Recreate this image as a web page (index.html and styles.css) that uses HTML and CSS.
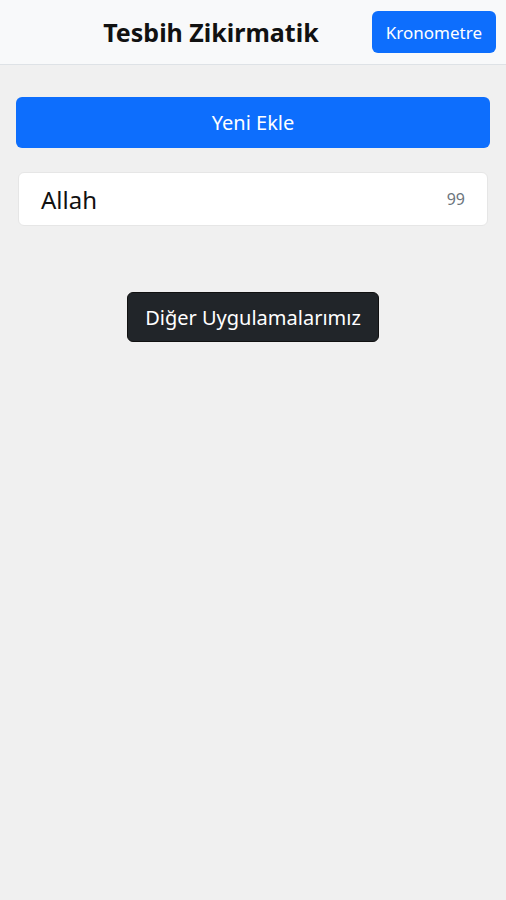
FILE: index.html
```html
<!DOCTYPE html>
<html lang="tr">
<head>
    <meta charset="UTF-8">
    <meta name="viewport" content="width=device-width, initial-scale=1.0">
    <title>Tesbih Zikirmatik</title>
    <link rel="stylesheet" href="styles.css">
</head>
<body>
    <header class="topbar">
        <h1 class="title">Tesbih Zikirmatik</h1>
        <button class="btn btn-primary btn-small">Kronometre</button>
    </header>
    <main class="content">
        <button class="btn btn-primary btn-block">Yeni Ekle</button>
        <div class="zikir-list">
            <div class="zikir-item">
                <span class="zikir-name">Allah</span>
                <span class="zikir-count">99</span>
            </div>
        </div>
        <div class="more-apps">
            <button class="btn btn-dark">Diğer Uygulamalarımız</button>
        </div>
    </main>
</body>
</html>
```

FILE: styles.css
```css
body {
    font-family: "Noto Sans", "Open Sans", sans-serif;
    background-color: #f0f0f0;
    margin: 0;
    padding: 0;
    color: #212529;
}
.topbar {
    display: flex;
    align-items: center;
    height: 64px;
    padding: 0 10px 0 0;
    background-color: #f8f9fa;
    border-bottom: 1px solid #dee2e6;
}
.title {
    flex: 1;
    margin: 0;
    padding-left: 50px;
    text-align: center;
    font-size: 25px;
    font-weight: 700;
    color: #111;
}
.btn {
    font-family: inherit;
    border: none;
    border-radius: 6px;
    color: #fff;
    cursor: pointer;
}
.btn-primary {
    background-color: #0d6efd;
}
.btn-dark {
    background-color: #212529;
    border: 1px solid #111;
}
.btn-small {
    height: 42px;
    padding: 0 14px;
    font-size: 17px;
}
.content {
    padding: 32px 16px;
}
.btn-block {
    display: block;
    width: 100%;
    height: 51px;
    font-size: 20px;
}
.zikir-list {
    margin: 24px 2px 0;
}
.zikir-item {
    display: flex;
    align-items: center;
    justify-content: space-between;
    height: 52px;
    padding: 0 22px;
    background-color: #fff;
    border: 1px solid #e6e6e6;
    border-radius: 6px;
}
.zikir-name {
    font-size: 24px;
    color: #111;
}
.zikir-count {
    font-size: 16px;
    color: #6c757d;
}
.more-apps {
    display: flex;
    justify-content: center;
    margin-top: 66px;
}
.btn-dark {
    height: 50px;
    padding: 0 17px;
    font-size: 20px;
}
```
